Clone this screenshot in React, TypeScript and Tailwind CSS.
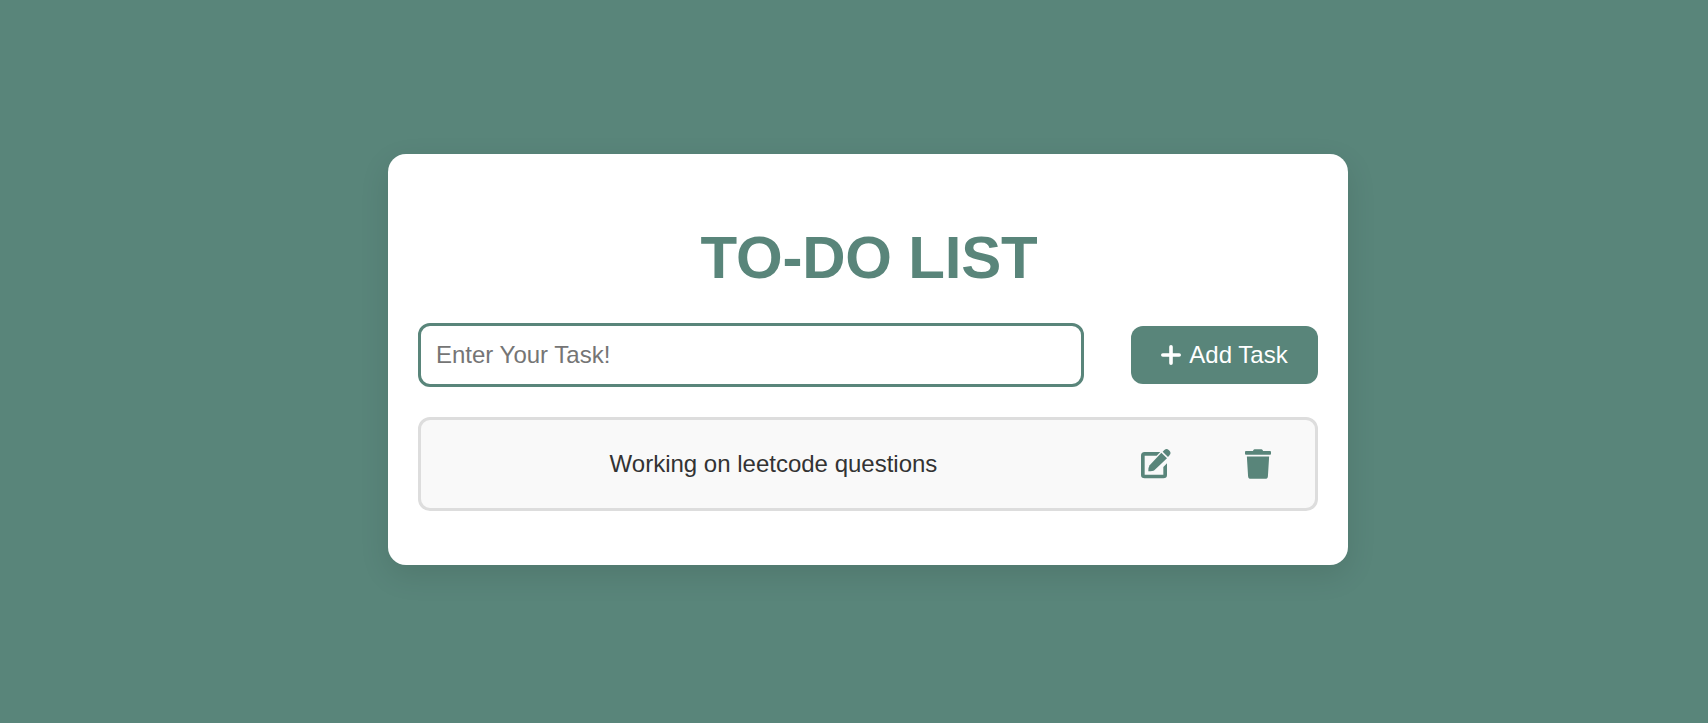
import { useState } from "react";
import { FaTrash } from "react-icons/fa";

function EditIcon() {
  return (
    <svg viewBox="0 0 90 90" className="size-[30px]" fill="currentColor">
      <path
        fillRule="evenodd"
        d="M58 9H11Q0 9 0 20V78Q0 88 11 88H67Q78 88 78 78V43L67 54V77H11V20H47Z"
      />
      <path d="M61 11L78 28L40 64Q36 67 22 67Q22 54 26 49Z" />
      <path d="M65 8L70 3Q77 -3 83 3L86 6Q91 12 86 18L81 24Z" />
    </svg>
  );
}

function PlusIcon() {
  return (
    <svg viewBox="0 0 20 20" className="size-5" fill="none" stroke="currentColor" strokeWidth="3.6" strokeLinecap="round">
      <path d="M10 1.8v16.4M1.8 10h16.4" />
    </svg>
  );
}

function TaskItem({ text, onRemove }: { text: string; onRemove: () => void }) {
  return (
    <li className="flex h-[94px] items-center rounded-xl border-3 border-[#dddddd] bg-[#f9f9f9] pr-11">
      <span className="grow pr-[15px] text-center text-[24px] leading-7 text-[#333333]">{text}</span>
      <button aria-label="Edit task" className="mr-[74px] shrink-0">
        <EditIcon />
      </button>
      <button aria-label="Delete task" className="w-[26px] shrink-0" onClick={onRemove}>
        <FaTrash className="h-[30px] w-[26px]" />
      </button>
    </li>
  );
}

export default function App() {
  const [tasks, setTasks] = useState(["Working on leetcode questions"]);
  const [draft, setDraft] = useState("");

  const addTask = () => {
    if (!draft.trim()) return;
    setTasks([...tasks, draft.trim()]);
    setDraft("");
  };

  return (
    <div className="flex min-h-screen items-start justify-center bg-[#59857a] pt-[154px] pl-7 font-['Liberation_Sans',Arial,sans-serif] text-[#59857a]">
      <main className="min-h-[411px] w-[960px] rounded-[18px] bg-white px-[30px] pt-[69px] pb-[54px] shadow-[0_10px_30px_rgba(0,0,0,0.1)]">
        <h1 className="pl-[2px] text-center text-[60px] leading-[70px] font-bold tracking-[-0.2px]">TO-DO LIST</h1>
        <div className="mt-[30px] flex items-center justify-between">
          <input
            className="h-16 w-[666px] rounded-xl border-3 border-[#59857a] px-[15px] text-[24px] text-[#333333] outline-none placeholder:text-[#757575]"
            placeholder="Enter Your Task!"
            value={draft}
            onChange={(e) => setDraft(e.target.value)}
          />
          <button
            className="flex h-[58px] w-[187px] items-center justify-center gap-2 rounded-xl bg-[#59857a] text-[24px] text-white"
            onClick={addTask}
          >
            <PlusIcon />
            Add Task
          </button>
        </div>
        <ul className="mt-[30px] flex flex-col gap-5">
          {tasks.map((task, i) => (
            <TaskItem key={i} text={task} onRemove={() => setTasks(tasks.filter((_, j) => j !== i))} />
          ))}
        </ul>
      </main>
    </div>
  );
}
